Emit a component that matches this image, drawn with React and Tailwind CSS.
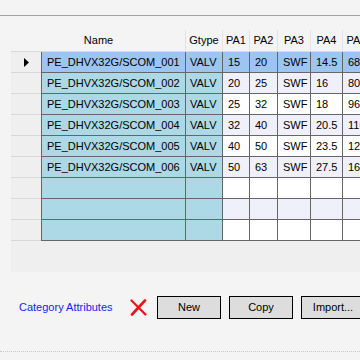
const rows = [
  ['PE_DHVX32G/SCOM_001', 'VALV', '15', '20', 'SWF', '14.5', '68'],
  ['PE_DHVX32G/SCOM_002', 'VALV', '20', '25', 'SWF', '16', '80'],
  ['PE_DHVX32G/SCOM_003', 'VALV', '25', '32', 'SWF', '18', '96'],
  ['PE_DHVX32G/SCOM_004', 'VALV', '32', '40', 'SWF', '20.5', '110'],
  ['PE_DHVX32G/SCOM_005', 'VALV', '40', '50', 'SWF', '23.5', '125'],
  ['PE_DHVX32G/SCOM_006', 'VALV', '50', '63', 'SWF', '27.5', '160'],
  ['', '', '', '', '', '', ''],
  ['', '', '', '', '', '', ''],
  ['', '', '', '', '', '', ''],
]

// column widths after the Name column (Gtype .. PA5)
const widths = ['w-[37px]', 'w-[27px]', 'w-[28px]', 'w-[33px]', 'w-[32px]', 'w-[28px]']
const heads = ['Gtype', 'PA1', 'PA2', 'PA3', 'PA4', 'PA5']

function Button({ children }) {
  return (
    <button className="w-[64px] h-[23px] ml-[8px] shrink-0 border border-black bg-[#dddddd] text-[11px] text-black">
      {children}
    </button>
  )
}

export default function App() {
  return (
    <div className="w-[360px] h-[360px] overflow-hidden bg-[#f4f4f4] text-[11px] text-black" style={{ fontFamily: '"Liberation Sans", Arial, sans-serif' }}>
      <div className="h-[15px]" />
      <div className="h-px bg-[#a3a3a3]" />
      <div className="h-[14px]" />

      <div className="ml-[11px] w-[349px] h-[242px] bg-[#efefef] overflow-hidden">
        {/* header */}
        <div className="flex h-[22px] bg-[#f4f4f4] border-b border-[#dadada] whitespace-nowrap">
          <div className="w-[31px] shrink-0" />
          <div className="w-[144px] shrink-0 flex items-center justify-center pr-[30px] border-r border-[#e2e2e2]">Name</div>
          {heads.map((h, i) => (
            <div key={h} className={`${widths[i]} shrink-0 flex items-center justify-center border-r border-[#e2e2e2]`}>{h}</div>
          ))}
        </div>

        {rows.map((r, ri) => {
          const sel = ri === 0
          const alt = ri % 2 === 1
          const keyBg = sel ? 'bg-[#9cc5f2]' : 'bg-[#add8e6]'
          const valBg = sel ? 'bg-[#9cc5f2]' : alt ? 'bg-[#f0f0fa]' : 'bg-white'
          return (
            <div key={ri} className="flex h-[21px] whitespace-nowrap">
              <div className="w-[30px] shrink-0 flex items-center pl-[13px] border-b border-[#d8d8d8]">
                {sel && (
                  <svg width="5" height="9" viewBox="0 0 5 9"><path d="M0 0 L5 4.5 L0 9 Z" fill="#000" /></svg>
                )}
              </div>
              <div className={`w-[145px] shrink-0 flex items-center pl-[5px] border-l border-r border-b border-[#666666] ${keyBg}`}>{r[0]}</div>
              <div className={`${widths[0]} shrink-0 flex items-center pl-[4px] border-r border-b border-[#666666] ${keyBg}`}>{r[1]}</div>
              {r.slice(2).map((v, ci) => (
                <div key={ci} className={`${widths[ci + 1]} shrink-0 flex items-center pl-[5px] border-r border-b border-[#666666] overflow-hidden ${valBg}`}>{v}</div>
              ))}
            </div>
          )
        })}
      </div>

      <div className="h-[24px]" />

      <div className="flex items-center h-[23px] pl-[19px] whitespace-nowrap">
        <span className="w-[93px] shrink-0 text-[#1a1aff]">Category Attributes</span>
        <svg className="ml-[18px] shrink-0" width="17" height="17" viewBox="0 0 17 17">
          <path d="M1.5 1.5 L15.5 15.5" stroke="#e8141b" strokeWidth="2.2" strokeLinecap="round" />
          <path d="M15 1.5 L2 15.5" stroke="#e8141b" strokeWidth="2.6" strokeLinecap="round" />
        </svg>
        <div className="w-[2px] shrink-0" />
        <Button>New</Button>
        <Button>Copy</Button>
        <Button>Import...</Button>
      </div>

      <div className="h-[32px]" />
      <div className="border-t border-dotted border-[#c8c8c8]" />
    </div>
  )
}
